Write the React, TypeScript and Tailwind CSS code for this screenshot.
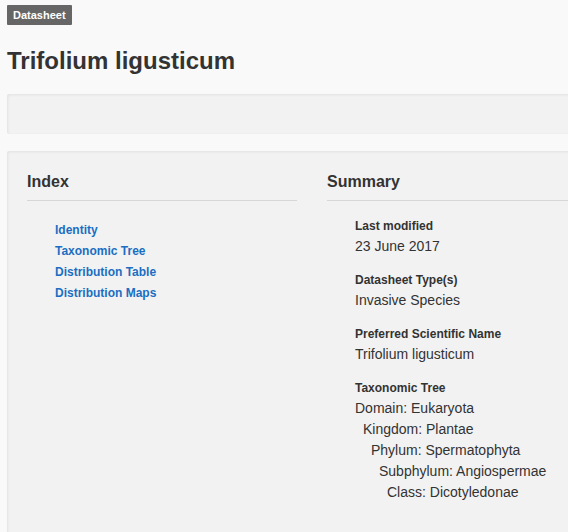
import React from "react";

const indexLinks = ["Identity", "Taxonomic Tree", "Distribution Table", "Distribution Maps"];

const summaryItems: { label: string; value: string }[] = [
  { label: "Last modified", value: "23 June 2017" },
  { label: "Datasheet Type(s)", value: "Invasive Species" },
  { label: "Preferred Scientific Name", value: "Trifolium ligusticum" },
];

const taxonomy = [
  { text: "Domain: Eukaryota", indent: "pl-0" },
  { text: "Kingdom: Plantae", indent: "pl-[8px]" },
  { text: "Phylum: Spermatophyta", indent: "pl-[16px]" },
  { text: "Subphylum: Angiospermae", indent: "pl-[24px]" },
  { text: "Class: Dicotyledonae", indent: "pl-[32px]" },
];

export default function App() {
  return (
    <div
      className="w-[568px] h-[532px] overflow-hidden bg-[#f9f9f9] text-[#333]"
      style={{ fontFamily: '"Liberation Sans", Arial, sans-serif' }}
    >
      <div className="w-[800px] pl-[7px] pt-[5px]">
        <div className="w-fit bg-[#666] text-white font-bold text-[11px] leading-[20px] px-[6px] rounded-[1px]">
          Datasheet
        </div>

        <h1 className="mt-[21px] text-[24px] leading-[30px] font-bold text-[#333]">
          Trifolium ligusticum
        </h1>

        <div className="mt-[18px] h-[40px] bg-[#f2f2f2] rounded-l-[2px] shadow-[inset_1px_1px_3px_rgba(0,0,0,0.07)]" />

        <div className="mt-[17px] h-[400px] bg-[#f2f2f2] rounded-l-[2px] shadow-[inset_1px_1px_3px_rgba(0,0,0,0.07)] pt-[21px] pl-[20px] flex gap-[30px]">
          <section className="w-[270px]">
            <h2 className="text-[16px] leading-[20px] font-bold pb-[8px] border-b border-[#d6d6d6] text-[#333]">
              Index
            </h2>
            <ul className="mt-[19px] pl-[28px]">
              {indexLinks.map((l) => (
                <li key={l} className="text-[12px] leading-[21px] font-bold text-[#1b6ec2]">
                  {l}
                </li>
              ))}
            </ul>
          </section>

          <section className="w-[300px]">
            <h2 className="text-[16px] leading-[20px] font-bold pb-[8px] border-b border-[#d6d6d6] text-[#333]">
              Summary
            </h2>
            <div className="mt-[16px] pl-[28px]">
              {summaryItems.map((it) => (
                <div key={it.label} className="mb-[15px]">
                  <div className="text-[12px] leading-[19px] font-bold">{it.label}</div>
                  <div className="text-[14px] leading-[20px]">{it.value}</div>
                </div>
              ))}
              <div className="text-[12px] leading-[19px] font-bold">Taxonomic Tree</div>
              {taxonomy.map((t) => (
                <div key={t.text} className={`text-[14px] leading-[21px] ${t.indent}`}>
                  {t.text}
                </div>
              ))}
            </div>
          </section>
        </div>
      </div>
    </div>
  );
}
